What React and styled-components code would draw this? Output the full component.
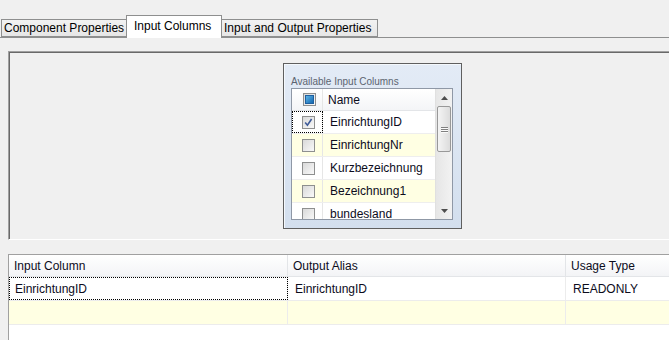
import React from 'react';
import styled, { createGlobalStyle } from 'styled-components';

const GlobalStyle = createGlobalStyle`
  html, body {
    margin: 0;
    padding: 0;
    background: #f0f0f0;
  }
  body {
    font-family: "Liberation Sans", Arial, sans-serif;
    font-size: 12px;
    color: #000;
  }
`;

const Window = styled.div`
  width: 669px;
  height: 340px;
  overflow: hidden;
  background: #f0f0f0;
`;

const TabStrip = styled.div`
  display: flex;
  align-items: flex-end;
  height: 37px;
  padding-left: 1px;
  border-bottom: 1px solid #8e8f8f;
`;

const Tab = styled.div`
  box-sizing: border-box;
  width: ${(props) => props.w}px;
  height: ${(props) => (props.active ? '23px' : '18px')};
  margin-bottom: ${(props) => (props.active ? '-1px' : '0')};
  margin-left: ${(props) => (props.first ? '0' : '-1px')};
  position: relative;
  z-index: ${(props) => (props.active ? '2' : '1')};
  border: 1px solid #8e8f8f;
  border-bottom: ${(props) => (props.active ? 'none' : '1px solid #8e8f8f')};
  background: ${(props) => (props.active ? '#ffffff' : 'linear-gradient(#f2f2f2, #e6e6e6)')};
  display: flex;
  align-items: ${(props) => (props.active ? 'flex-start' : 'center')};
  padding: ${(props) => (props.active ? '3px 0 0 7px' : '0 0 0 2px')};
  white-space: nowrap;
  line-height: 15px;
`;

const Content = styled.div`
  padding: 13px 0 0 8px;
`;

const SunkenFrame = styled.div`
  box-sizing: border-box;
  width: 720px;
  height: 189px;
  border-top: 1px solid #a0a0a0;
  border-left: 1px solid #a0a0a0;
  border-bottom: 1px solid #ffffff;
  box-shadow: inset 1px 1px 0 #696969;
  padding: 11px 0 0 274px;
`;

const Chooser = styled.div`
  box-sizing: border-box;
  width: 179px;
  height: 166px;
  border: 1px solid #5f5f5f;
  background: linear-gradient(#e3ebf6, #d3dfee);
  box-shadow: inset 1px 1px 0 #f4f8fc;
  padding: 0 0 0 7px;
`;

const ChooserTitle = styled.div`
  height: 24px;
  display: flex;
  align-items: flex-end;
  padding-bottom: 1px;
  box-sizing: border-box;
  font-size: 10px;
  color: #5c6470;
  white-space: nowrap;
`;

const ListBox = styled.div`
  box-sizing: border-box;
  width: 162px;
  height: 132px;
  border: 1px solid #8f98a6;
  background: #ffffff;
  display: flex;
  overflow: hidden;
`;

const ListBody = styled.div`
  width: 144px;
  display: flex;
  flex-direction: column;
`;

const ListHeader = styled.div`
  display: grid;
  grid-template-columns: 31px 1fr;
  height: 21px;
  border-bottom: 1px solid #e3e5e8;
  background: linear-gradient(#ffffff, #f4f5f7);
  flex-shrink: 0;
`;

const ListRow = styled.div`
  display: grid;
  grid-template-columns: 31px 1fr;
  height: 22px;
  border-bottom: 1px solid #eeeeee;
  background: ${(props) => (props.alt ? '#ffffe3' : '#ffffff')};
  flex-shrink: 0;
`;

const CheckCell = styled.div`
  box-sizing: border-box;
  display: flex;
  align-items: center;
  padding-left: 10px;
  border-right: 1px solid #e6e6e6;
  outline: ${(props) => (props.focus ? '1px dotted #000' : 'none')};
  outline-offset: -1px;
  background: ${(props) => (props.focus ? '#ffffff' : 'transparent')};
`;

const NameCell = styled.div`
  display: flex;
  align-items: center;
  padding-left: 7px;
  white-space: nowrap;
  color: #0c0c1c;
`;

const HeaderName = styled(NameCell)`
  padding-left: 5px;
`;

const Box = styled.span`
  box-sizing: border-box;
  width: 13px;
  height: 13px;
  border: 1px solid #8e8f8f;
  background: linear-gradient(135deg, #d9d9d9, #f9f9f9);
  display: flex;
  align-items: center;
  justify-content: center;
  margin-left: ${(props) => (props.header ? '1px' : '0')};
`;

const BoxFill = styled.span`
  width: 7px;
  height: 7px;
  border: 1px solid #1f5f9e;
  background: linear-gradient(135deg, #5cb3e6, #1468b0);
`;

const ScrollBar = styled.div`
  width: 16px;
  border-left: 1px solid #e0e0e0;
  background: linear-gradient(90deg, #e6e6e6, #f2f2f2);
  display: flex;
  flex-direction: column;
`;

const ArrowButton = styled.div`
  height: 17px;
  display: flex;
  align-items: center;
  justify-content: center;
  flex-shrink: 0;
`;

const Thumb = styled.div`
  box-sizing: border-box;
  height: 46px;
  margin: 0 1px 0 1px;
  border: 1px solid #989898;
  border-radius: 2px;
  background: linear-gradient(90deg, #f4f4f4, #dcdcdc);
  display: flex;
  flex-direction: column;
  align-items: center;
  justify-content: center;
  gap: 1px;
`;

const Grip = styled.span`
  width: 7px;
  height: 1px;
  background: #7f7f7f;
  box-shadow: 0 1px 0 #fafafa;
`;

const Track = styled.div`
  flex: 1;
`;

const Grid = styled.div`
  box-sizing: border-box;
  margin-top: 14px;
  width: 720px;
  height: 120px;
  border-top: 1px solid #a0a0a0;
  border-left: 1px solid #a0a0a0;
  background: #ffffff;
`;

const GridHeader = styled.div`
  display: grid;
  grid-template-columns: 279px 278px 1fr;
  height: 21px;
  border-bottom: 1px solid #e3e5e8;
  background: linear-gradient(#ffffff, #f3f4f6);
`;

const GridRow = styled.div`
  display: grid;
  grid-template-columns: 279px 278px 1fr;
  height: 23px;
  border-bottom: 1px solid #ececec;
  background: ${(props) => (props.alt ? '#ffffe3' : '#ffffff')};
`;

const HeadCell = styled.div`
  display: flex;
  align-items: center;
  padding-left: 5px;
  border-right: 1px solid #e3e5e8;
  white-space: nowrap;
  color: #0c0c1c;
`;

const Cell = styled.div`
  display: flex;
  align-items: center;
  padding-left: ${(props) => (props.first ? '6px' : '7px')};
  border-right: 1px solid #ececec;
  outline: ${(props) => (props.focus ? '1px dotted #000' : 'none')};
  outline-offset: -1px;
  white-space: nowrap;
  color: #0c0c1c;
`;

const Arrow = ({ down }) => (
  <svg width="7" height="4" viewBox="0 0 7 4">
    <path d={down ? 'M0 0H7L3.5 4Z' : 'M0 4H7L3.5 0Z'} fill="#4d4d4d" />
  </svg>
);

const CheckBox = ({ checked }) => (
  <Box>
    {checked && (
      <svg width="11" height="11" viewBox="0 0 11 11">
        <path d="M2.2 5.6L4.4 8.2L8.6 2" fill="none" stroke="#3e5a98" strokeWidth="1.6" />
      </svg>
    )}
  </Box>
);

const columns = [
  { name: 'EinrichtungID', checked: true },
  { name: 'EinrichtungNr' },
  { name: 'Kurzbezeichnung' },
  { name: 'Bezeichnung1' },
  { name: 'bundesland' },
];

export default function App() {
  return (
    <Window>
      <GlobalStyle />
      <TabStrip>
        <Tab first w={126}>Component Properties</Tab>
        <Tab active w={96}>Input Columns</Tab>
        <Tab w={157}>Input and Output Properties</Tab>
      </TabStrip>
      <Content>
        <SunkenFrame>
          <Chooser>
            <ChooserTitle>Available Input Columns</ChooserTitle>
            <ListBox>
              <ListBody>
                <ListHeader>
                  <CheckCell>
                    <Box header>
                      <BoxFill />
                    </Box>
                  </CheckCell>
                  <HeaderName>Name</HeaderName>
                </ListHeader>
                {columns.map((c, i) => (
                  <ListRow key={c.name} alt={i % 2 === 1}>
                    <CheckCell focus={i === 0}>
                      <CheckBox checked={c.checked} />
                    </CheckCell>
                    <NameCell>{c.name}</NameCell>
                  </ListRow>
                ))}
              </ListBody>
              <ScrollBar>
                <ArrowButton>
                  <Arrow />
                </ArrowButton>
                <Thumb>
                  <Grip />
                  <Grip />
                  <Grip />
                </Thumb>
                <Track />
                <ArrowButton>
                  <Arrow down />
                </ArrowButton>
              </ScrollBar>
            </ListBox>
          </Chooser>
        </SunkenFrame>
        <Grid>
          <GridHeader>
            <HeadCell>Input Column</HeadCell>
            <HeadCell>Output Alias</HeadCell>
            <HeadCell>Usage Type</HeadCell>
          </GridHeader>
          <GridRow>
            <Cell first focus>EinrichtungID</Cell>
            <Cell>EinrichtungID</Cell>
            <Cell>READONLY</Cell>
          </GridRow>
          <GridRow alt>
            <Cell first />
            <Cell />
            <Cell />
          </GridRow>
        </Grid>
      </Content>
    </Window>
  );
}
